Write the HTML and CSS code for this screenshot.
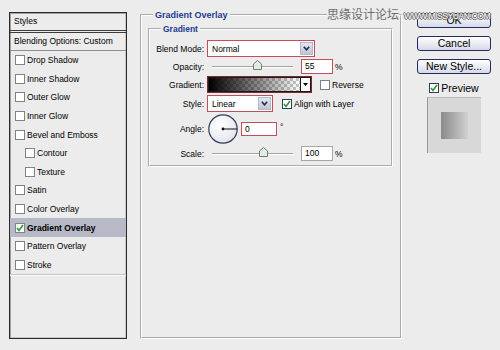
FILE: index.html
```html
<!DOCTYPE html>
<html lang="en">
<head>
  <meta charset="UTF-8" />
  <meta name="viewport" content="width=device-width, initial-scale=1.0" />
  <title>Layer Style - Gradient Overlay</title>
  <link rel="stylesheet" href="styles.css">
</head>
<body>
<div class="dialog">

  <div class="styles-list">
    <div class="list-head">Styles</div>
    <div class="list-blend">Blending Options: Custom</div>
    <div class="list-item"><span class="box"></span>Drop Shadow</div>
    <div class="list-item"><span class="box"></span>Inner Shadow</div>
    <div class="list-item"><span class="box"></span>Outer Glow</div>
    <div class="list-item"><span class="box"></span>Inner Glow</div>
    <div class="list-item"><span class="box"></span>Bevel and Emboss</div>
    <div class="list-item sub"><span class="box"></span>Contour</div>
    <div class="list-item sub"><span class="box"></span>Texture</div>
    <div class="list-item"><span class="box"></span>Satin</div>
    <div class="list-item"><span class="box"></span>Color Overlay</div>
    <div class="list-item active">
      <span class="box"><svg viewBox="0 0 8 8" width="8" height="8"><polyline points="1,4 3,6.5 7,1" fill="none" stroke="#2a9b2a" stroke-width="1.6"/></svg></span>Gradient Overlay
    </div>
    <div class="list-item"><span class="box"></span>Pattern Overlay</div>
    <div class="list-item"><span class="box"></span>Stroke</div>
    <div class="list-end"></div>
  </div>

  <fieldset class="panel">
    <legend>Gradient Overlay</legend>
    <fieldset class="group">
      <legend>Gradient</legend>
      <div class="form">

        <label>Blend Mode:</label>
        <div class="ctrl">
          <div class="select select-blend red">
            <span class="value">Normal</span>
            <span class="arrow"><svg viewBox="0 0 7 5" width="7" height="5"><polyline points="0.8,0.8 3.5,3.8 6.2,0.8" fill="none" stroke="#1e2a50" stroke-width="1.6"/></svg></span>
          </div>
        </div>

        <label>Opacity:</label>
        <div class="ctrl">
          <div class="slider">
            <svg class="thumb" style="left: 55%;" viewBox="0 0 9 10" width="9" height="10"><polygon points="4.5,0.5 8.5,4 8.5,9.5 0.5,9.5 0.5,4" fill="#e3ece3" stroke="#6f7f70" stroke-width="1"/></svg>
          </div>
          <div class="field red">55</div>
          <span class="unit">%</span>
        </div>

        <label>Gradient:</label>
        <div class="ctrl">
          <div class="gradient">
            <span class="ramp"></span>
            <span class="drop"><svg viewBox="0 0 5 3" width="5" height="3"><polygon points="0,0 5,0 2.5,3" fill="#000"/></svg></span>
          </div>
          <div class="check check-reverse"><span class="box"></span>Reverse</div>
        </div>

        <label>Style:</label>
        <div class="ctrl">
          <div class="select select-style red">
            <span class="value">Linear</span>
            <span class="arrow"><svg viewBox="0 0 7 5" width="7" height="5"><polyline points="0.8,0.8 3.5,3.8 6.2,0.8" fill="none" stroke="#1e2a50" stroke-width="1.6"/></svg></span>
          </div>
          <div class="check check-align">
            <span class="box dark"><svg viewBox="0 0 8 8" width="8" height="8"><polyline points="1,4 3,6.5 7,1" fill="none" stroke="#2a9b2a" stroke-width="1.6"/></svg></span>Align with Layer
          </div>
        </div>

        <label>Angle:</label>
        <div class="ctrl">
          <svg class="dial" viewBox="0 0 30 30" width="30" height="30">
            <defs>
              <radialGradient id="dialFill" cx="40%" cy="35%" r="70%">
                <stop offset="0" stop-color="#ffffff"/>
                <stop offset="1" stop-color="#e2e4ec"/>
              </radialGradient>
            </defs>
            <circle cx="15" cy="15" r="14.2" fill="url(#dialFill)" stroke="#2f3a5c" stroke-width="1.2"/>
            <line x1="15" y1="15" x2="29" y2="15" stroke="#111" stroke-width="1"/>
            <circle cx="15" cy="15" r="1.4" fill="#111"/>
          </svg>
          <div class="field angle red">0</div>
          <span class="deg">°</span>
        </div>

        <label>Scale:</label>
        <div class="ctrl">
          <div class="slider">
            <svg class="thumb" style="left: 63%;" viewBox="0 0 9 10" width="9" height="10"><polygon points="4.5,0.5 8.5,4 8.5,9.5 0.5,9.5 0.5,4" fill="#e3ece3" stroke="#6f7f70" stroke-width="1"/></svg>
          </div>
          <div class="field">100</div>
          <span class="unit">%</span>
        </div>

      </div>
    </fieldset>
  </fieldset>

  <div class="side">
    <button class="btn">OK</button>
    <button class="btn">Cancel</button>
    <button class="btn">New Style...</button>
    <div class="preview-check">
      <span class="box dark"><svg viewBox="0 0 8 8" width="8" height="8"><polyline points="1,4 3,6.5 7,1" fill="none" stroke="#2a9b2a" stroke-width="1.6"/></svg></span>Preview
    </div>
    <div class="swatch"><div class="swatch-inner"></div></div>
  </div>

  <div class="watermark">
    <span class="wm-cn">思缘设计论坛</span>
    <span class="wm-url">WWW.MISSYUAN.COM</span>
  </div>

</div>
</body>
</html>
```

FILE: styles.css
```css
body {
  margin: 0;
  background: #ececec;
  font-family: "Liberation Sans", Arial, sans-serif;
  font-size: 8.5px;
  color: #000;
}
.dialog {
  position: relative;
  display: flex;
  align-items: flex-start;
  width: 500px;
  height: 350px;
  padding-left: 9px;
  box-sizing: border-box;
  overflow: hidden;
}

/* left column: list of layer styles */
.styles-list {
  width: 118px;
  height: 327px;
  margin-top: 12px;
  border: 1px solid #2b2b2b;
  box-shadow: inset 1px 1px 0 #a0a0a0, inset -1px -1px 0 #c8c8c8;
  box-sizing: border-box;
  flex: none;
}
.list-head {
  height: 17px;
  line-height: 17px;
  padding-left: 4px;
  border-bottom: 3px double #3c3c3c;
}
.list-blend {
  height: 17px;
  line-height: 17px;
  padding-left: 4px;
  border-bottom: 1px solid #8e8e8e;
}
.list-item {
  display: flex;
  align-items: center;
  gap: 2px;
  height: 18.6px;
  padding-left: 5px;
}
.list-item.sub { padding-left: 15px; }
.list-item.active {
  background: #b7b9c6;
  font-weight: bold;
}
.list-end {
  border-top: 1px solid #c6c6c6;
  border-bottom: 1px solid #fafafa;
}
.box {
  display: flex;
  align-items: center;
  justify-content: center;
  width: 8px;
  height: 8px;
  border: 1px solid #7d8190;
  background: #fff;
  flex: none;
}
.box.dark { border-color: #2f3a5c; }

/* middle: gradient overlay group */
.panel {
  width: 262px;
  height: 330px;
  margin: 9px 0 0 13px;
  padding: 0;
  min-width: 0;
  border: 2px groove #fff;
  box-sizing: border-box;
  flex: none;
}
.panel > legend,
.group > legend {
  margin-left: 11px;
  padding: 0 2px;
  line-height: 12px;
  font-weight: bold;
  font-size: 9px;
  color: #1d3b92;
}
.group > legend { font-size: 8.5px; }
.group {
  margin: 2px 7px 0 6px;
  padding: 5px 0 4px;
  min-width: 0;
  border: 2px groove #fff;
}
.form {
  display: grid;
  grid-template-columns: 54px auto;
  column-gap: 3px;
  row-gap: 2px;
  align-items: center;
}
.form label { text-align: right; }
.ctrl {
  display: flex;
  align-items: center;
}

.select {
  display: flex;
  align-items: center;
  height: 17px;
  padding: 1px;
  border: 1px solid #a7a7a7;
  background: #fff;
  box-sizing: border-box;
}
.select .value { flex: 1; padding-left: 3px; }
.select .arrow {
  display: flex;
  align-items: center;
  justify-content: center;
  width: 13px;
  height: 13px;
  border: 1px solid #b3b7c8;
  background: linear-gradient(#e4e6ee, #c2c5d3);
  box-sizing: border-box;
}
.select-blend { width: 108px; }
.select-style { width: 66px; }
.red { border-color: #c24d5c !important; }

.slider {
  position: relative;
  width: 81px;
  height: 15px;
  margin: 0 8px 0 5px;
}
.slider::before {
  content: "";
  position: absolute;
  left: 0;
  right: 0;
  top: 7px;
  height: 1px;
  background: #a3a3a3;
  border-bottom: 1px solid #fff;
}
.thumb {
  position: absolute;
  top: 1px;
  margin-left: -4px;
}

.field {
  width: 32px;
  height: 15px;
  padding-left: 3px;
  line-height: 13px;
  border: 1px solid #a7a7a7;
  background: #fff;
  box-sizing: border-box;
}
.field.angle {
  width: 36px;
  height: 14px;
  line-height: 12px;
  margin-left: 3px;
}
.unit { margin-left: 2px; }
.deg { margin-left: 3px; margin-top: -4px; }

.gradient {
  display: flex;
  width: 105px;
  height: 17px;
  padding: 1px;
  border: 1px solid #7e2632;
  box-shadow: inset 0 0 0 1px #1b1b1b;
  background: #fff;
  box-sizing: border-box;
}
.gradient .ramp {
  flex: 1;
  background:
    linear-gradient(to right, #000, rgba(0, 0, 0, 0)),
    conic-gradient(#c8c8c8 25%, #fff 0 50%, #c8c8c8 0 75%, #fff 0) 0 0 / 6px 6px;
}
.gradient .drop {
  display: flex;
  align-items: center;
  justify-content: center;
  width: 9px;
  border-left: 1px solid #1b1b1b;
}
.check {
  display: flex;
  align-items: center;
  gap: 2px;
}
.check-reverse { margin-left: 8px; }
.check-align { margin-left: 9px; }
.dial { margin-left: 1px; flex: none; }

/* right column */
.side {
  display: flex;
  flex-direction: column;
  align-items: center;
  width: 74px;
  margin-left: 15px;
  padding-top: 13px;
  flex: none;
}
.btn {
  width: 74px;
  height: 15px;
  margin-bottom: 8px;
  padding: 0;
  border: 1px solid #222c5e;
  border-radius: 3px;
  background: linear-gradient(#ffffff, #d6d9e7);
  font: 10.5px "Liberation Sans", Arial, sans-serif;
  line-height: 13px;
  color: #000;
}
.preview-check {
  display: flex;
  align-items: center;
  gap: 2px;
  height: 11px;
  font-size: 10.5px;
}
.swatch {
  display: flex;
  align-items: center;
  justify-content: center;
  width: 54px;
  height: 56px;
  margin-top: 4px;
  border-left: 1px solid #999;
  border-top: 1px solid #bdbdbd;
  background: #d8d8d8;
  box-sizing: border-box;
}
.swatch-inner {
  width: 27px;
  height: 27px;
  background: linear-gradient(to right, #8a8a8a, #d0d0d0);
}

/* site watermark */
.watermark {
  position: absolute;
  top: 7px;
  left: 327px;
  display: flex;
  align-items: flex-start;
  gap: 5px;
}
.wm-cn {
  font-family: "Noto Sans CJK SC", sans-serif;
  font-size: 12px;
  line-height: 14px;
  color: #6e6e6e;
  background: #ececec;
}
.wm-url {
  margin-top: 4px;
  font-size: 8.5px;
  line-height: 10px;
  letter-spacing: -0.4px;
  color: #fff;
  text-shadow: 1px 0 #666, -1px 0 #666, 0 1px #666, 0 -1px #666;
}
```
